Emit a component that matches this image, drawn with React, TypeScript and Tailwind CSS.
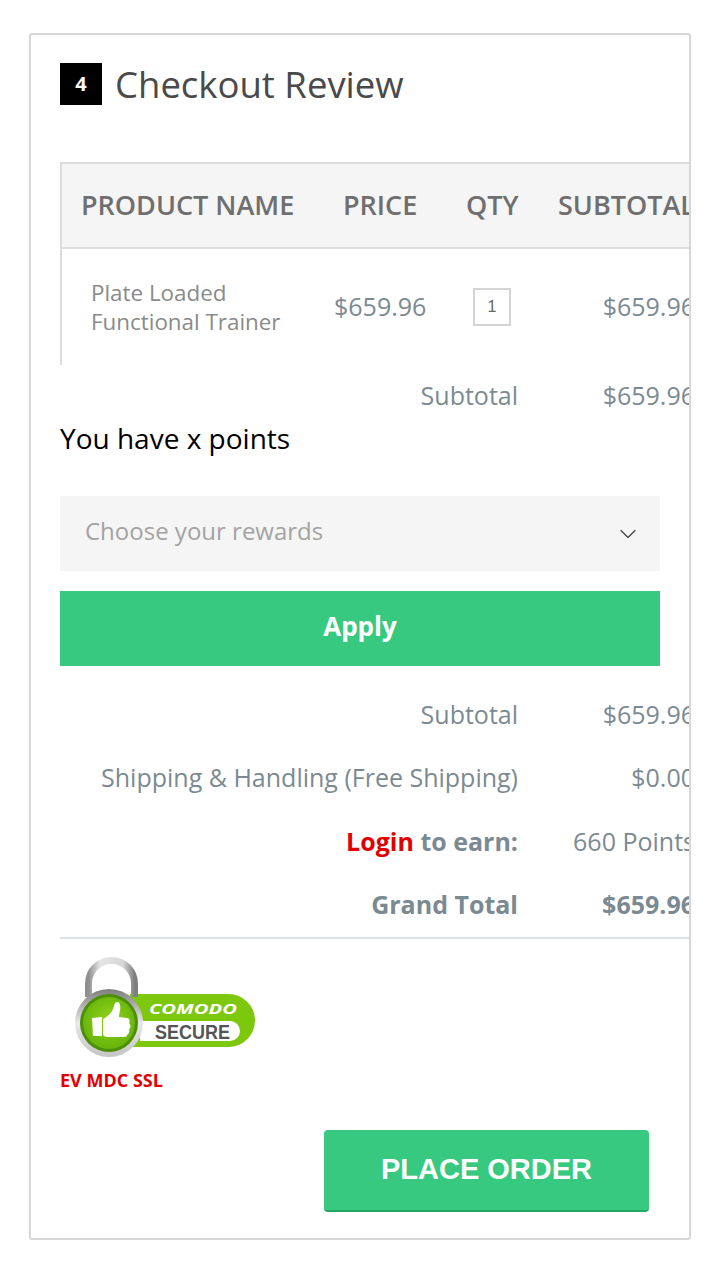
import { ChevronDown } from "lucide-react";

const openSans = "font-['Open_Sans',sans-serif]";

function TotalRow({ label, value, bold, valueRegular }: { label: React.ReactNode; value: string; bold?: boolean; valueRegular?: boolean }) {
  return (
    <div className={`flex h-[63.5px] w-[637px] items-center text-[25px] text-[#7b8a92] ${bold ? "font-bold" : ""}`}>
      <div className="w-[458px] shrink-0 text-right whitespace-nowrap">{label}</div>
      <div className={`w-[177px] shrink-0 text-right whitespace-nowrap ${valueRegular ? "font-normal" : ""}`}>{value}</div>
    </div>
  );
}

function ComodoBadge() {
  return (
    <svg width="190" height="110" viewBox="0 0 190 110">
      <defs>
        <linearGradient id="shackle" x1="0" y1="0" x2="1" y2="0">
          <stop offset="0" stopColor="#8f8f8f" />
          <stop offset="0.25" stopColor="#e6e6e6" />
          <stop offset="0.75" stopColor="#d6d6d6" />
          <stop offset="1" stopColor="#7f7f7f" />
        </linearGradient>
        <linearGradient id="ring" x1="0" y1="0" x2="0" y2="1">
          <stop offset="0" stopColor="#7d7d7d" />
          <stop offset="0.5" stopColor="#e8e8e8" />
          <stop offset="1" stopColor="#c4c4c4" />
        </linearGradient>
        <radialGradient id="disc" cx="0.5" cy="0.45" r="0.55">
          <stop offset="0" stopColor="#93d51c" />
          <stop offset="1" stopColor="#66b30a" />
        </radialGradient>
      </defs>
      <path d="M60 39h98.500a26.500 26.500 0 0 1 0 53H60z" fill="#7dc70d" />
      <path d="M18.500 42V28.500a23 23 0 0 1 46 0V42" fill="none" stroke="url(#shackle)" strokeWidth="7" />
      <path d="M70 66h90a10 10 0 0 1 0 20H70z" fill="#fff" />
      <circle cx="39" cy="68" r="34" fill="url(#ring)" />
      <circle cx="39" cy="68" r="29" fill="#4c8f05" />
      <circle cx="39" cy="68" r="26" fill="url(#disc)" />
      <path d="M22 63l10-1v19l-9 0z" fill="#fff" />
      <path d="M33 64C37 62 41 59 43 54L45 48C47 46 50 47 50 50C51 54 49 58 49 62L57 63C60 63 60 67 59 68C61 70 61 73 59 74C60 76 59 79 57 80C57 81 56 82 54 82L38 82C35 82 33 81 33 79Z" fill="#fff" />
      <text x="79" y="59" fontFamily="'Open Sans',sans-serif" fontSize="15" fontWeight="700" fontStyle="italic" fill="#fff" textLength="88" lengthAdjust="spacingAndGlyphs">COMODO</text>
      <text x="85" y="84" fontFamily="'Liberation Sans',sans-serif" fontSize="21" fontWeight="700" fill="#555" textLength="75" lengthAdjust="spacingAndGlyphs">SECURE</text>
    </svg>
  );
}

export default function App() {
  return (
    <div className={`min-h-[1280px] bg-white px-[29px] pt-[33px] ${openSans}`}>
      <div className="h-[1207px] w-[662px] overflow-hidden rounded-[3px] border-2 border-[#d6d6d6] bg-white pl-[29px]">
        {/* Header */}
        <div className="mt-[28px] flex h-[42px] items-center gap-[13px]">
          <div className="flex h-[42px] w-[42px] items-center justify-center bg-black text-[20px] font-bold text-white">4</div>
          <h2 className="text-[36.500px] leading-none whitespace-nowrap text-[#4a4a4a]">Checkout Review</h2>
        </div>

        {/* Product table */}
        <div className="mt-[57px] w-[700px] border-l-2 border-[#dddddd]">
          <div className="grid h-[87px] grid-cols-[261px_123px_92px_224px] items-center border-y-2 border-[#dddddd] bg-[#f5f5f5] text-[27px] font-semibold text-[#6f6f6f]">
            <div className="pl-[19px] whitespace-nowrap">PRODUCT NAME</div>
            <div className="pl-[20px]">PRICE</div>
            <div className="pl-[20px]">QTY</div>
            <div className="pl-[20px]">SUBTOTAL</div>
          </div>
          <div className="grid h-[116px] grid-cols-[261px_123px_92px_157px] items-center text-[25px] text-[#7b8a92]">
            <div className="pl-[29px] text-[22.400px] leading-[29px] text-[#8a8a8a]">
              Plate Loaded
              <br />
              Functional Trainer
            </div>
            <div className="pl-[11px]">$659.96</div>
            <div className="pl-[27px]">
              <div className="flex h-[38px] w-[38px] items-center justify-center border-2 border-[#d4d4d4] font-['Liberation_Sans',sans-serif] text-[16px] text-[#666666]">1</div>
            </div>
            <div className="text-right">$659.96</div>
          </div>
        </div>

        <div className="-mt-[1px]">
          <TotalRow label="Subtotal" value="$659.96" />
        </div>

        {/* Rewards */}
        <p className="-mt-[10px] text-[28px] leading-[40px] text-black">You have x points</p>
        <div className="mt-[38px] flex h-[75px] w-[600px] items-center justify-between bg-[#f5f5f5] pr-[18px] pb-[4px] pl-[25px] text-[24px] text-[#a3a3a3]">
          Choose your rewards
          <ChevronDown className="mt-[6px] h-[28px] w-[28px] text-[#444444]" strokeWidth={1.1} />
        </div>
        <button className="mt-[20px] block h-[75px] w-[600px] bg-[#37c980] pb-[3px] text-[26px] font-bold text-white">Apply</button>

        {/* Totals */}
        <div className="mt-[17px]">
          <TotalRow label="Subtotal" value="$659.96" />
          <TotalRow label="Shipping & Handling (Free Shipping)" value="$0.00" />
          <TotalRow
            bold
            valueRegular
            label={
              <>
                <span className="text-[#e00000]">Login</span> to earn:
              </>
            }
            value="660 Points"
          />
          <TotalRow bold label="Grand Total" value="$659.96" />
        </div>
        <div className="h-[2px] w-[640px] bg-[#dde1e4]" />

        {/* Seal */}
        <div className="mt-[16px] ml-[10px] h-[113px]">
          <ComodoBadge />
        </div>
        <p className="text-[18px] leading-[24px] font-bold text-[#e00000]">EV MDC SSL</p>

        <button className="mt-[38px] ml-[264px] block h-[82px] w-[325px] rounded-[4px] border-b-2 border-[#25a765] bg-[#37c980] font-['Liberation_Sans',sans-serif] text-[29px] font-bold text-white">
          PLACE ORDER
        </button>
      </div>
    </div>
  );
}
